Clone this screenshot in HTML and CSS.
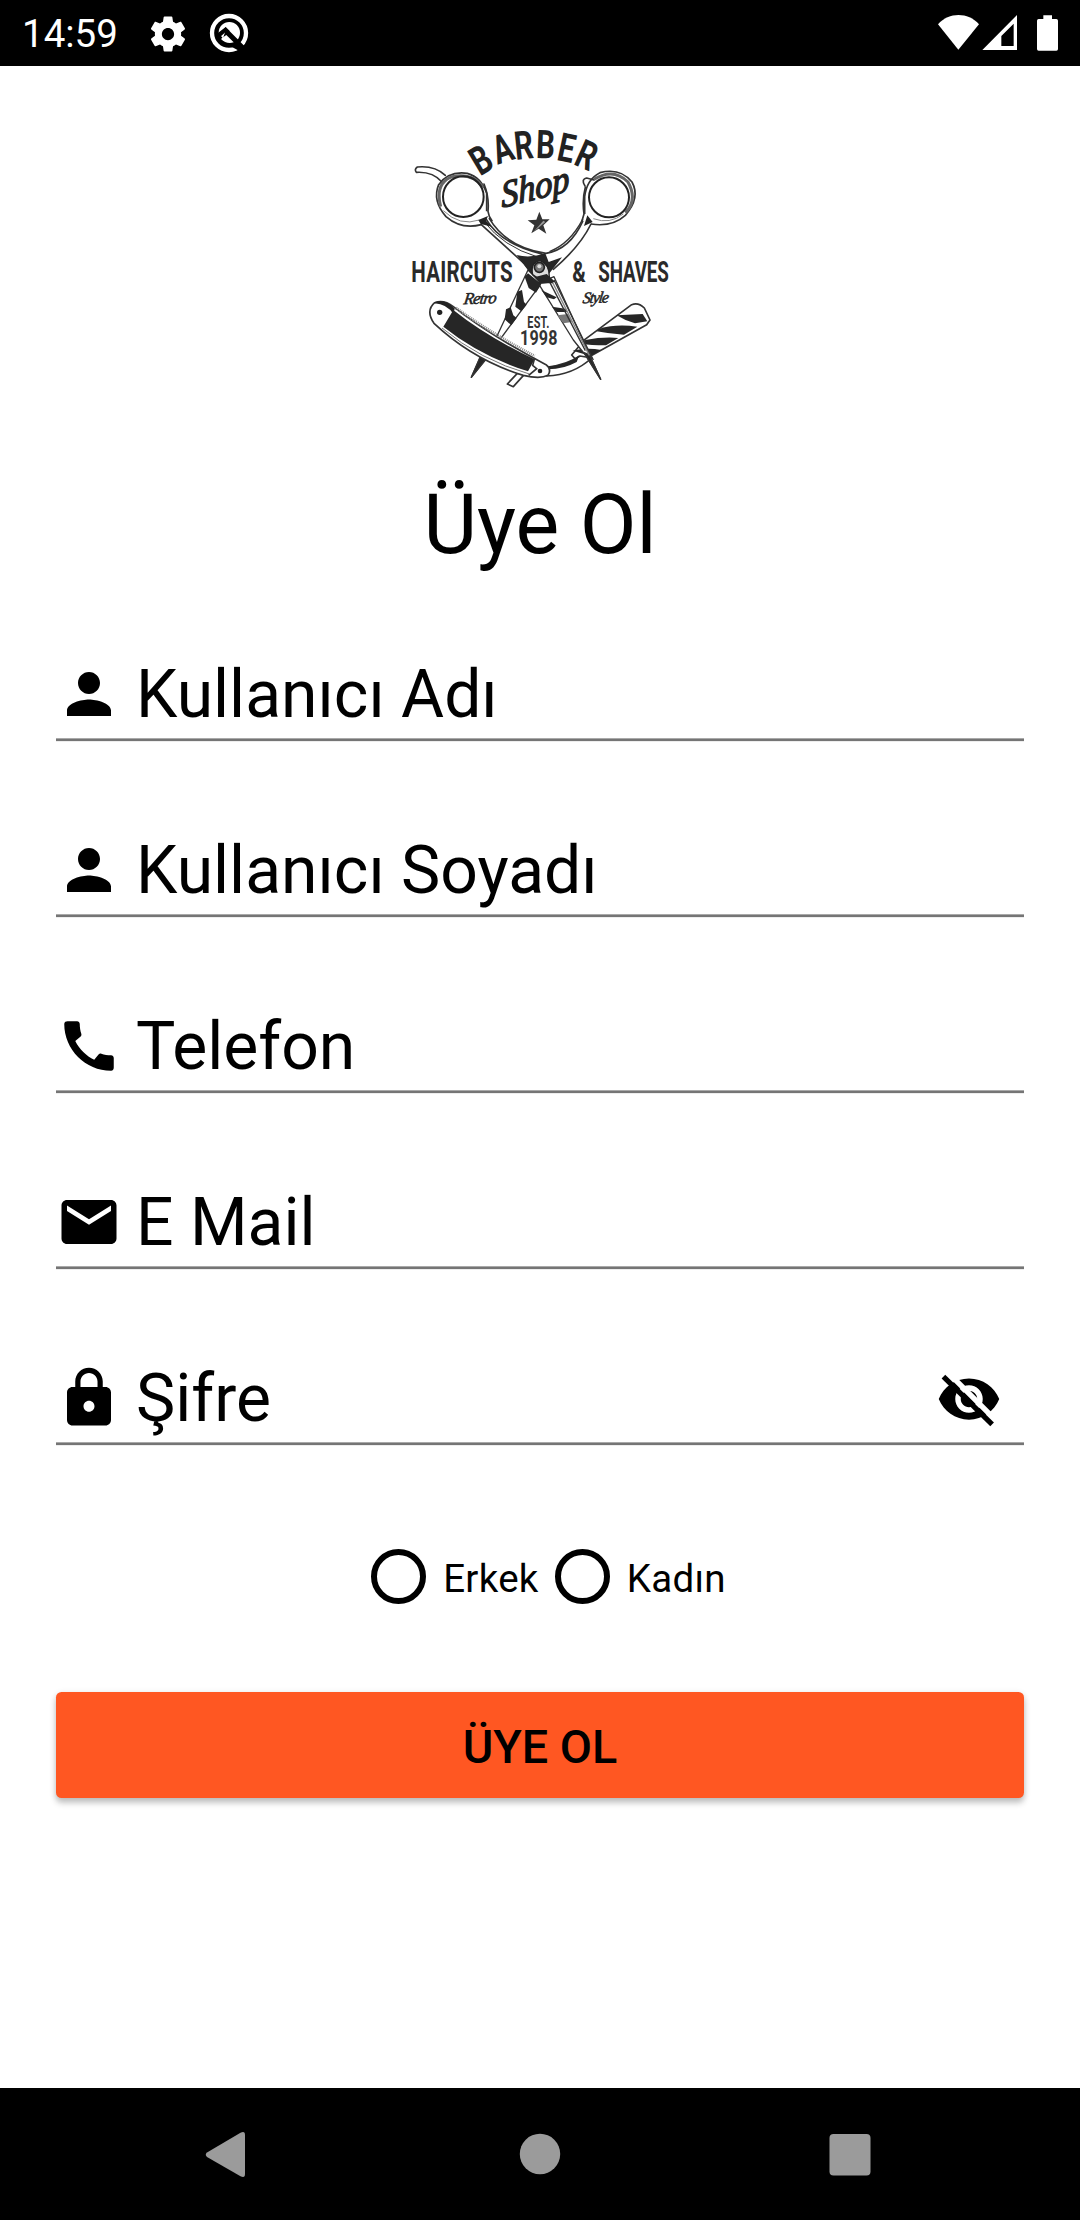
FILE: index.html
```html
<!DOCTYPE html>
<html lang="tr">
<head>
<meta charset="utf-8">
<title>Üye Ol</title>
<link rel="stylesheet" href="styles.css">
</head>
<body>
<div class="screen">
  <header class="status">
    <span class="clock">14:59</span>
    <svg class="gear" viewBox="0 0 24 24"><path fill="#fff" d="M19.43 12.98c.04-.32.07-.64.07-.98s-.03-.66-.07-.98l2.11-1.65c.19-.15.24-.42.12-.64l-2-3.46c-.12-.22-.39-.3-.61-.22l-2.49 1c-.52-.4-1.08-.73-1.69-.98l-.38-2.65C14.46 2.18 14.25 2 14 2h-4c-.25 0-.46.18-.49.42l-.38 2.65c-.61.25-1.17.59-1.69.98l-2.49-1c-.23-.09-.49 0-.61.22l-2 3.46c-.13.22-.07.49.12.64l2.11 1.65c-.04.32-.07.65-.07.98s.03.66.07.98l-2.11 1.65c-.19.15-.24.42-.12.64l2 3.46c.12.22.39.3.61.22l2.49-1c.52.4 1.08.73 1.69.98l.38 2.65c.03.24.24.42.49.42h4c.25 0 .46-.18.49-.42l.38-2.65c.61-.25 1.17-.59 1.69-.98l2.49 1c.23.09.49 0 .61-.22l2-3.46c.12-.22.07-.49-.12-.64l-2.11-1.65zM12 15.5c-1.93 0-3.5-1.57-3.5-3.5s1.57-3.5 3.5-3.5 3.5 1.57 3.5 3.5-1.57 3.5-3.5 3.5z"/></svg>
    <svg class="android-q" viewBox="0 0 120 120">
      <circle cx="60" cy="60" r="51" fill="none" stroke="#fff" stroke-width="13"/>
      <circle cx="61" cy="59" r="32" fill="#fff"/>
      <path d="M24 62L50 42L62 54L58 60L112 112L98 118L36 84Z" fill="#000"/>
      <path d="M30 62L50 52L42 76Z" fill="#fff"/>
      <path d="M40 74L52 66L74 88Q52 94 36 78Z" fill="#fff"/>
      <path d="M28 70L50 50L108 108" fill="none" stroke="#000" stroke-width="10"/>
    </svg>
    <svg class="signals" viewBox="0 0 540 198" fill="#fff">
      <path d="M175 149L114 73C147 36 204 36 237 73Z"/>
      <path fill-rule="evenodd" d="M247 150L351 45V150ZM304 138H341V71L304 108Z"/>
      <path d="M430 46H456V57H469Q474 57 474 62V147Q474 152 469 152H416Q411 152 411 147V62Q411 57 416 57H430Z"/>
    </svg>
  </header>

  <main class="content">
    <svg class="logo" viewBox="0 0 840 870">
      <!-- razor blade -->
      <g fill="#fff" stroke="#333" stroke-width="5" stroke-linejoin="round">
        <path d="M515 735L555 688L695 584Q715 576 733 594L750 630L740 644L572 738L530 752Z"/>
        <path d="M440 772Q500 765 540 738L575 744Q520 795 440 798Z"/>
        <path d="M322 822L352 790H376L340 830Z"/>
      </g>
      <g fill="#262626">
        <path d="M650 616L728 612L742 634L705 640Q675 632 650 616Z"/>
        <path d="M598 656Q650 640 712 650L672 674Q630 672 590 664Z"/>
        <path d="M556 690Q610 680 655 684L618 706Q570 706 548 702Z"/>
        <path d="M518 722Q560 712 604 720L572 738Z"/>
        <path d="M445 770Q500 765 538 736L530 756Q490 778 445 778Z"/>
      </g>
      <!-- scissor blades -->
      <g stroke="#333" stroke-width="4" stroke-linejoin="round">
        <path fill="#fff" d="M384 480L424 520L266 735L214 802L244 735L290 680Z"/>
        <path fill="#262626" d="M240 742L266 738L214 802Z"/>
        <path fill="#fff" d="M415 520L462 500L602 808L556 735L520 690Z"/>
        <path fill="#262626" d="M552 728L568 734L602 808Z"/>
      </g>
      <g fill="#262626">
        <path d="M384 490L424 522L408 548L386 534L374 500Z"/>
        <path d="M352 545L366 540L372 576L380 584L364 604L346 590Z"/>
        <path d="M318 598L332 592L340 616L350 624L334 646L314 628Z"/>
        <path d="M424 540L470 562L462 568L440 562Z"/>
        <path d="M456 590L496 596L502 606L470 606Z"/>
        <path d="M472 616L504 612L516 636L490 640Z" fill="#777"/>
      </g>
      <path d="M462 510L580 750M448 514L556 722" fill="none" stroke="#333" stroke-width="4"/>
      <path d="M455 512L568 736" fill="none" stroke="#888" stroke-width="4"/>
      <!-- handles -->
      <g fill="none" stroke="#333" stroke-width="5" stroke-linejoin="round" stroke-linecap="round">
        <path fill="#fff" d="M136 196Q104 166 52 171Q42 178 49 187Q98 184 126 216"/>
        <path fill="#fff" d="M555 228Q542 208 560 204L582 210"/>
        <path d="M259 328Q300 400 420 430Q440 436 426 446M244 344L372 460L392 484"/>
        <path d="M268 326Q320 412 438 430Q510 418 548 334"/>
        <path d="M573 342Q540 410 460 478"/>
        <path d="M548 328Q510 400 450 424" stroke-width="4"/>
        <path d="M252 335Q310 410 410 440" stroke-width="3"/>
        <path d="M252 222Q268 260 264 304Q266 320 276 332M556 232Q546 270 552 312L546 332"/>
      </g>
      <g fill="none">
        <path stroke="#333" stroke-width="5" d="M244 344Q184 360 138 320Q96 272 116 224Q146 182 202 190Q244 202 260 250V304"/>
        <path stroke="#333" stroke-width="5" d="M573 342Q636 352 676 316Q722 264 696 216Q660 172 600 188Q560 208 554 260V312"/>
        <path stroke="#666" stroke-width="9" d="M122 290Q104 220 156 200Q220 188 248 232M582 208Q640 172 684 216Q714 270 676 308"/>
        <circle cx="190" cy="260" r="61" stroke="#222" stroke-width="6"/>
        <circle cx="627" cy="262" r="60" stroke="#222" stroke-width="6"/>
        <path stroke="#888" stroke-width="3" d="M130 302Q180 350 238 330M580 326Q630 344 670 312"/>
      </g>
      <path d="M235 330L264 318L258 332L276 350L242 342ZM562 316L578 336L552 348Z" fill="#222"/>
      <!-- pivot -->
      <path d="M350 435Q390 446 436 430L446 456L486 442L440 500L460 520L420 520L385 482Z" fill="#262626"/>
      <path d="M398 494Q390 458 420 452Q448 462 448 500L430 516Z" fill="#ddd" stroke="#222" stroke-width="4"/>
      <circle cx="418" cy="472" r="15" fill="#777" stroke="#222" stroke-width="5"/>
      <circle cx="418" cy="469" r="6" fill="#ddd"/>
      <path d="M408 500L440 492L466 516L420 522Z" fill="#262626"/>
      <!-- razor handle -->
      <path d="M104 578Q132 568 160 590Q260 670 438 764Q456 778 444 796Q420 808 370 796Q220 750 102 640Q76 602 104 578Z" fill="#fff" stroke="#333" stroke-width="5"/>
      <path d="M104 576Q140 566 164 596L160 612Q140 582 104 580Z" fill="#222"/>
      <path d="M160 600Q260 680 404 748L384 784Q240 738 130 650Z" fill="#262626"/>
      <path d="M168 594Q280 674 404 738" fill="none" stroke="#888" stroke-width="9" stroke-dasharray="3 3"/>
      <path d="M126 654Q240 750 388 792" fill="none" stroke="#777" stroke-width="3"/>
      <path d="M404 744L398 766L410 776L386 796" fill="none" stroke="#333" stroke-width="5"/>
      <circle cx="119" cy="607" r="8" fill="#222"/>
      <circle cx="420" cy="783" r="7" fill="#222"/>
      <path d="M418 305L427 328L449 328L430 346L439 371L416 356L394 370L403 346L383 331L409 329Z" fill="#333"/>
      <path d="M400 366L430 332L436 336Z" fill="#999"/>
      <!-- lettering -->
      <g class="arch">
        <text transform="translate(243 150) rotate(-31) scale(.74 1)" y="41">B</text>
        <text transform="translate(308 116) rotate(-18) scale(.74 1)" y="41">A</text>
        <text transform="translate(371 106) rotate(-6) scale(.74 1)" y="41">R</text>
        <text transform="translate(437 104) rotate(2) scale(.74 1)" y="41">B</text>
        <text transform="translate(500 114) rotate(12) scale(.74 1)" y="41">E</text>
        <text transform="translate(560 136) rotate(24) scale(.74 1)" y="41">R</text>
      </g>
      <text class="script" font-size="112" stroke-width="4" transform="translate(306 293) rotate(-14) skewX(-10) scale(.94 1)">Shop</text>
      <text class="block" font-size="88" transform="translate(34 515) scale(.7 1)" textLength="434">HAIRCUTS</text>
      <text class="block" font-size="88" transform="translate(517 515) scale(.7 1)">&amp;</text>
      <text class="block" font-size="88" transform="translate(595 515) scale(.64 1)" textLength="330">SHAVES</text>
      <text class="script" font-size="50" stroke-width="1.5" transform="translate(190 583) rotate(-2) skewX(-10)" textLength="98">Retro</text>
      <text class="script" font-size="48" stroke-width="1.5" transform="translate(547 580) rotate(-2) skewX(-10)" textLength="78">Style</text>
      <text class="est" font-size="51" transform="translate(382 654) scale(.64 1)" textLength="103">EST.</text>
      <text class="est" font-size="59" transform="translate(360 706) scale(.82 1)" textLength="137">1998</text>
    </svg>

    <h1 class="title">Üye Ol</h1>

    <form class="form">
      <div class="fields">
        <label class="field">
          <svg class="icon" viewBox="0 0 24 24"><path d="M12 12c2.21 0 4-1.79 4-4s-1.79-4-4-4-4 1.79-4 4 1.79 4 4 4zm0 2c-2.67 0-8 1.34-8 4v2h16v-2c0-2.66-5.33-4-8-4z"/></svg>
          <span>Kullanıcı Adı</span>
        </label>
        <label class="field">
          <svg class="icon" viewBox="0 0 24 24"><path d="M12 12c2.21 0 4-1.79 4-4s-1.79-4-4-4-4 1.79-4 4 1.79 4 4 4zm0 2c-2.67 0-8 1.34-8 4v2h16v-2c0-2.66-5.33-4-8-4z"/></svg>
          <span>Kullanıcı Soyadı</span>
        </label>
        <label class="field">
          <svg class="icon" viewBox="0 0 24 24"><path d="M20.01 15.38c-1.23 0-2.42-.2-3.53-.56-.35-.12-.74-.03-1.01.24l-1.57 1.97c-2.83-1.35-5.48-3.9-6.89-6.83l1.95-1.66c.27-.28.35-.67.24-1.02-.37-1.11-.56-2.3-.56-3.53 0-.54-.45-.99-.99-.99H4.19C3.65 3 3 3.24 3 3.99 3 13.28 10.73 21 20.01 21c.71 0 .99-.63.99-1.18v-3.45c0-.54-.45-.99-.99-.99z"/></svg>
          <span>Telefon</span>
        </label>
        <label class="field">
          <svg class="icon" viewBox="0 0 24 24"><path d="M20 4H4c-1.1 0-2 .9-2 2v12c0 1.1.9 2 2 2h16c1.1 0 2-.9 2-2V6c0-1.1-.9-2-2-2zm0 4l-8 5-8-5V6l8 5 8-5v2z"/></svg>
          <span>E Mail</span>
        </label>
        <label class="field">
          <svg class="icon" viewBox="0 0 24 24"><path d="M18 8h-1V6c0-2.76-2.24-5-5-5S7 3.24 7 6v2H6c-1.1 0-2 .9-2 2v10c0 1.1.9 2 2 2h12c1.1 0 2-.9 2-2V10c0-1.1-.9-2-2-2zm-6 9c-1.1 0-2-.9-2-2s.9-2 2-2 2 .9 2 2-.9 2-2 2zM8.9 8V6c0-1.71 1.39-3.1 3.1-3.1s3.1 1.39 3.1 3.1v2H8.9z"/></svg>
          <span>Şifre</span>
          <svg class="icon eye" viewBox="0 0 24 24">
            <path d="M12 4.5C7 4.5 2.73 7.61 1 12c1.73 4.39 6 7.5 11 7.5s9.27-3.11 11-7.5c-1.73-4.39-6-7.5-11-7.5zM12 17c-2.76 0-5-2.24-5-5s2.24-5 5-5 5 2.24 5 5-2.24 5-5 5zm0-8c-1.66 0-3 1.34-3 3s1.34 3 3 3 3-1.34 3-3-1.34-3-3-3z"/>
            <path d="M4.5 2.5L21.5 19.5" stroke="#fff" stroke-width="2"/>
            <path d="M2.7 3.9L20.4 21.2" stroke="#000" stroke-width="1.9"/>
          </svg>
        </label>
      </div>

      <div class="gender">
        <label class="choice"><i class="ring"></i><span>Erkek</span></label>
        <label class="choice"><i class="ring"></i><span>Kadın</span></label>
      </div>

      <button class="submit" type="button">ÜYE OL</button>
    </form>
  </main>

  <nav class="navbar">
    <svg viewBox="0 0 66 66"><path d="M10 31.5L43.5 11.8Q48 9.500 48 14V53Q48 57.500 43.500 55.200L10 36Q7.500 33.700 10 31.500Z"/></svg>
    <svg viewBox="0 0 66 66"><circle cx="33" cy="33" r="20.2"/></svg>
    <svg viewBox="0 0 66 66"><rect x="12.5" y="13" width="41" height="41.5" rx="4"/></svg>
  </nav>
</div>
</body>
</html>
```

FILE: styles.css
```css
* { box-sizing: border-box; }

body {
  margin: 0;
  background: #fff;
  color: #000;
  font-family: Roboto, "Liberation Sans", sans-serif;
}

.screen {
  display: flex;
  flex-direction: column;
  width: 1080px;
  height: 2220px;
}

svg { display: block; flex: none; }

.status {
  display: flex;
  align-items: center;
  height: 66px;
  padding-left: 22px;
  background: #000;
  color: #fff;
}

.clock {
  width: 125px;
  font-size: 38.5px;
  line-height: 66px;
  padding-top: 2px;
}

.gear { width: 42px; height: 42px; margin-top: 1px; }
.android-q { width: 40px; height: 40px; margin-left: 20px; }
.signals { width: 180px; height: 66px; margin-left: auto; }

.content {
  display: flex;
  flex: 1;
  flex-direction: column;
  padding: 44px 56px 0;
}

.logo {
  align-self: center;
  width: 280px;
  height: 290px;
  overflow: visible;
}

.arch {
  font: 700 119px Roboto, sans-serif;
  fill: #222;
  text-anchor: middle;
}

.script {
  font-family: "Liberation Serif", serif;
  font-style: italic;
  font-weight: 400;
  fill: #222;
  stroke: #222;
}

.block { font-family: Roboto, sans-serif; font-weight: 700; fill: #2a2a2a; }
.est { font-family: Roboto, sans-serif; font-weight: 700; fill: #333; }

.title {
  margin: 76px 0 0;
  font-size: 82.5px;
  font-weight: 400;
  line-height: 98px;
  text-align: center;
}

.form { display: flex; flex-direction: column; margin-top: 87px; }
.fields { display: flex; flex-direction: column; gap: 95px; }

.field {
  display: flex;
  align-items: flex-start;
  gap: 14px;
  height: 81px;
  font-size: 66px;
  line-height: 68px;
  background: linear-gradient(#a9a9a9 0 1px, #757575 1px 3px, #ededed 3px) bottom / 100% 4px no-repeat;
}

.icon { width: 66px; height: 66px; }
.eye { margin: 1px 22px 0 auto; }

.gender {
  display: flex;
  justify-content: center;
  gap: 16px;
  margin-top: 103px;
  padding-left: 17px;
}

.choice {
  display: flex;
  align-items: center;
  gap: 17px;
  font-size: 38.5px;
  line-height: 50px;
  letter-spacing: .3px;
}

.choice span { padding-top: 5px; }

.ring {
  width: 55px;
  height: 55px;
  border: 6px solid #000;
  border-radius: 50%;
}

.submit {
  height: 106px;
  margin-top: 88px;
  padding: 4px 0 0;
  border: 0;
  border-radius: 5.5px;
  background: #ff5722;
  box-shadow: 0 5px 6px rgba(0, 0, 0, .22), 0 1px 6px rgba(0, 0, 0, .1);
  color: #000;
  font: 500 46.75px Roboto, sans-serif;
}

.navbar {
  display: flex;
  align-items: center;
  justify-content: center;
  gap: 244px;
  height: 132px;
  background: #000;
  fill: #9b9b9b;
}

.navbar svg { width: 66px; height: 66px; }
```
